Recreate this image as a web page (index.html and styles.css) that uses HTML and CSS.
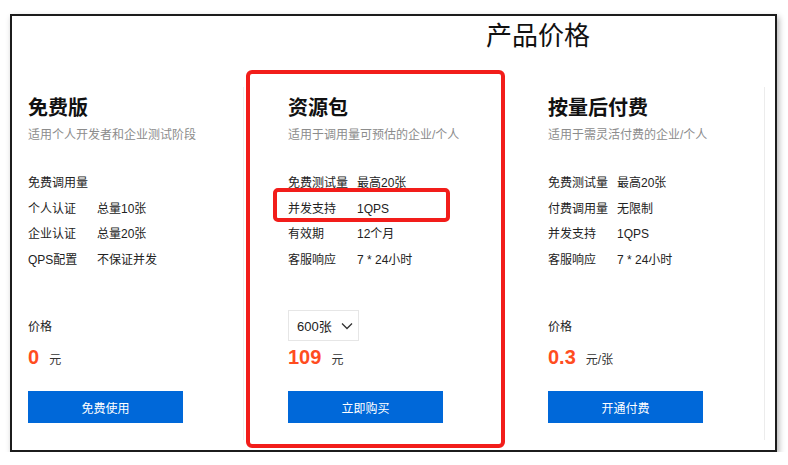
FILE: index.html
```html
<!DOCTYPE html>
<html lang="zh-CN">
<head>
  <meta charset="UTF-8">
  <meta name="viewport" content="width=device-width, initial-scale=1">
  <title>产品价格</title>
  <link rel="stylesheet" href="styles.css">
</head>
<body>

<div class="frame">
  <h1 class="title">产品价格</h1>

  <section class="plans">
    <div class="plan plan-free">
      <h2>免费版</h2>
      <p class="desc">适用个人开发者和企业测试阶段</p>
      <ul class="features">
        <li>免费调用量</li>
        <li><span class="label">个人认证</span>总量10张</li>
        <li><span class="label">企业认证</span>总量20张</li>
        <li><span class="label">QPS配置</span>不保证并发</li>
      </ul>
      <div class="price-head">价格</div>
      <div class="price"><strong>0</strong><span>元</span></div>
      <button class="buy">免费使用</button>
    </div>

    <div class="plan plan-pack">
      <h2>资源包</h2>
      <p class="desc">适用于调用量可预估的企业/个人</p>
      <ul class="features">
        <li><span class="label">免费测试量</span>最高20张</li>
        <li class="marked"><span class="label">并发支持</span>1QPS<span class="mark"></span></li>
        <li><span class="label">有效期</span>12个月</li>
        <li><span class="label">客服响应</span>7 * 24小时</li>
      </ul>
      <div class="price-head">
        <div class="select">600张
          <svg width="12" height="8" viewBox="0 0 12 8"><polyline points="1,1.5 6,6.5 11,1.5" fill="none" stroke="#333" stroke-width="1.3"/></svg>
        </div>
      </div>
      <div class="price"><strong>109</strong><span>元</span></div>
      <button class="buy">立即购买</button>
    </div>

    <div class="plan plan-post">
      <h2>按量后付费</h2>
      <p class="desc">适用于需灵活付费的企业/个人</p>
      <ul class="features">
        <li><span class="label">免费测试量</span>最高20张</li>
        <li><span class="label">付费调用量</span>无限制</li>
        <li><span class="label">并发支持</span>1QPS</li>
        <li><span class="label">客服响应</span>7 * 24小时</li>
      </ul>
      <div class="price-head">价格</div>
      <div class="price"><strong>0.3</strong><span>元/张</span></div>
      <button class="buy">开通付费</button>
    </div>
  </section>
</div>

</body>
</html>
```

FILE: styles.css
```css
body {
  margin: 0;
  background: #fff;
  font-family: "Liberation Sans", "Noto Sans CJK SC", sans-serif;
  color: #222;
}
.frame {
  margin: 14px 0 0 10px;
  width: 767px;
  height: 438px;
  box-sizing: border-box;
  border: 2px solid #1c1c1c;
  box-shadow: 2px 3px 6px rgba(0,0,0,0.3);
  background: #fff;
}
.title {
  margin: 0;
  height: 54px;
  padding-left: 474px;
  box-sizing: border-box;
  padding-top: 2px;
  font-size: 26px;
  line-height: 36px;
  font-weight: normal;
  color: #111;
}
.plans {
  display: grid;
  grid-template-columns: 232px 259px 258px;
  column-gap: 2px;
  align-items: start;
}
.plan {
  box-sizing: border-box;
  display: flex;
  flex-direction: column;
  align-items: flex-start;
}
.plan-free {
  margin-top: 17px;
  height: 353px;
  padding: 7px 0 0 16px;
  border-right: 1px solid #efefef;
}
.plan-pack {
  height: 378px;
  padding: 20px 0 0 38px;
  border: 4px solid #f21d1a;
  border-radius: 6px;
}
.plan-post {
  margin-top: 17px;
  height: 353px;
  padding: 7px 0 0 41px;
  border-right: 1px solid #ececec;
}
.plan h2 {
  margin: 0;
  font-size: 20px;
  line-height: 28px;
  color: #111;
}
.desc {
  margin: 4px 0 0;
  font-size: 12px;
  line-height: 18px;
  color: #8c8c8c;
}
.features {
  list-style: none;
  margin: 27px 0 0;
  padding: 0;
  font-size: 12px;
  line-height: 25.6px;
  height: 102.4px;
}
.features li {
  position: relative;
}
.label {
  display: inline-block;
  width: 69px;
}
.mark {
  position: absolute;
  left: -15px;
  top: -9px;
  width: 177px;
  height: 34px;
  box-sizing: border-box;
  border: 4px solid #f21d1a;
  border-radius: 5px;
}
.price-head {
  margin-top: 37px;
  height: 31px;
  display: flex;
  align-items: center;
  font-size: 12px;
}
.select {
  width: 71px;
  height: 31px;
  box-sizing: border-box;
  border: 1px solid #e6e6e6;
  padding-left: 8px;
  display: flex;
  align-items: center;
  gap: 9px;
  font-size: 13px;
  color: #222;
}
.price {
  margin-top: 2px;
  height: 28px;
  display: flex;
  align-items: baseline;
}
.price strong {
  font-size: 20px;
  line-height: 28px;
  color: #ff4d1f;
}
.price span {
  margin-left: 10px;
  font-size: 12px;
  color: #333;
}
.buy {
  margin-top: 20px;
  width: 155px;
  height: 32px;
  border: none;
  background: #0068d9;
  color: #fff;
  font-family: inherit;
  font-size: 12px;
  cursor: pointer;
}
```
